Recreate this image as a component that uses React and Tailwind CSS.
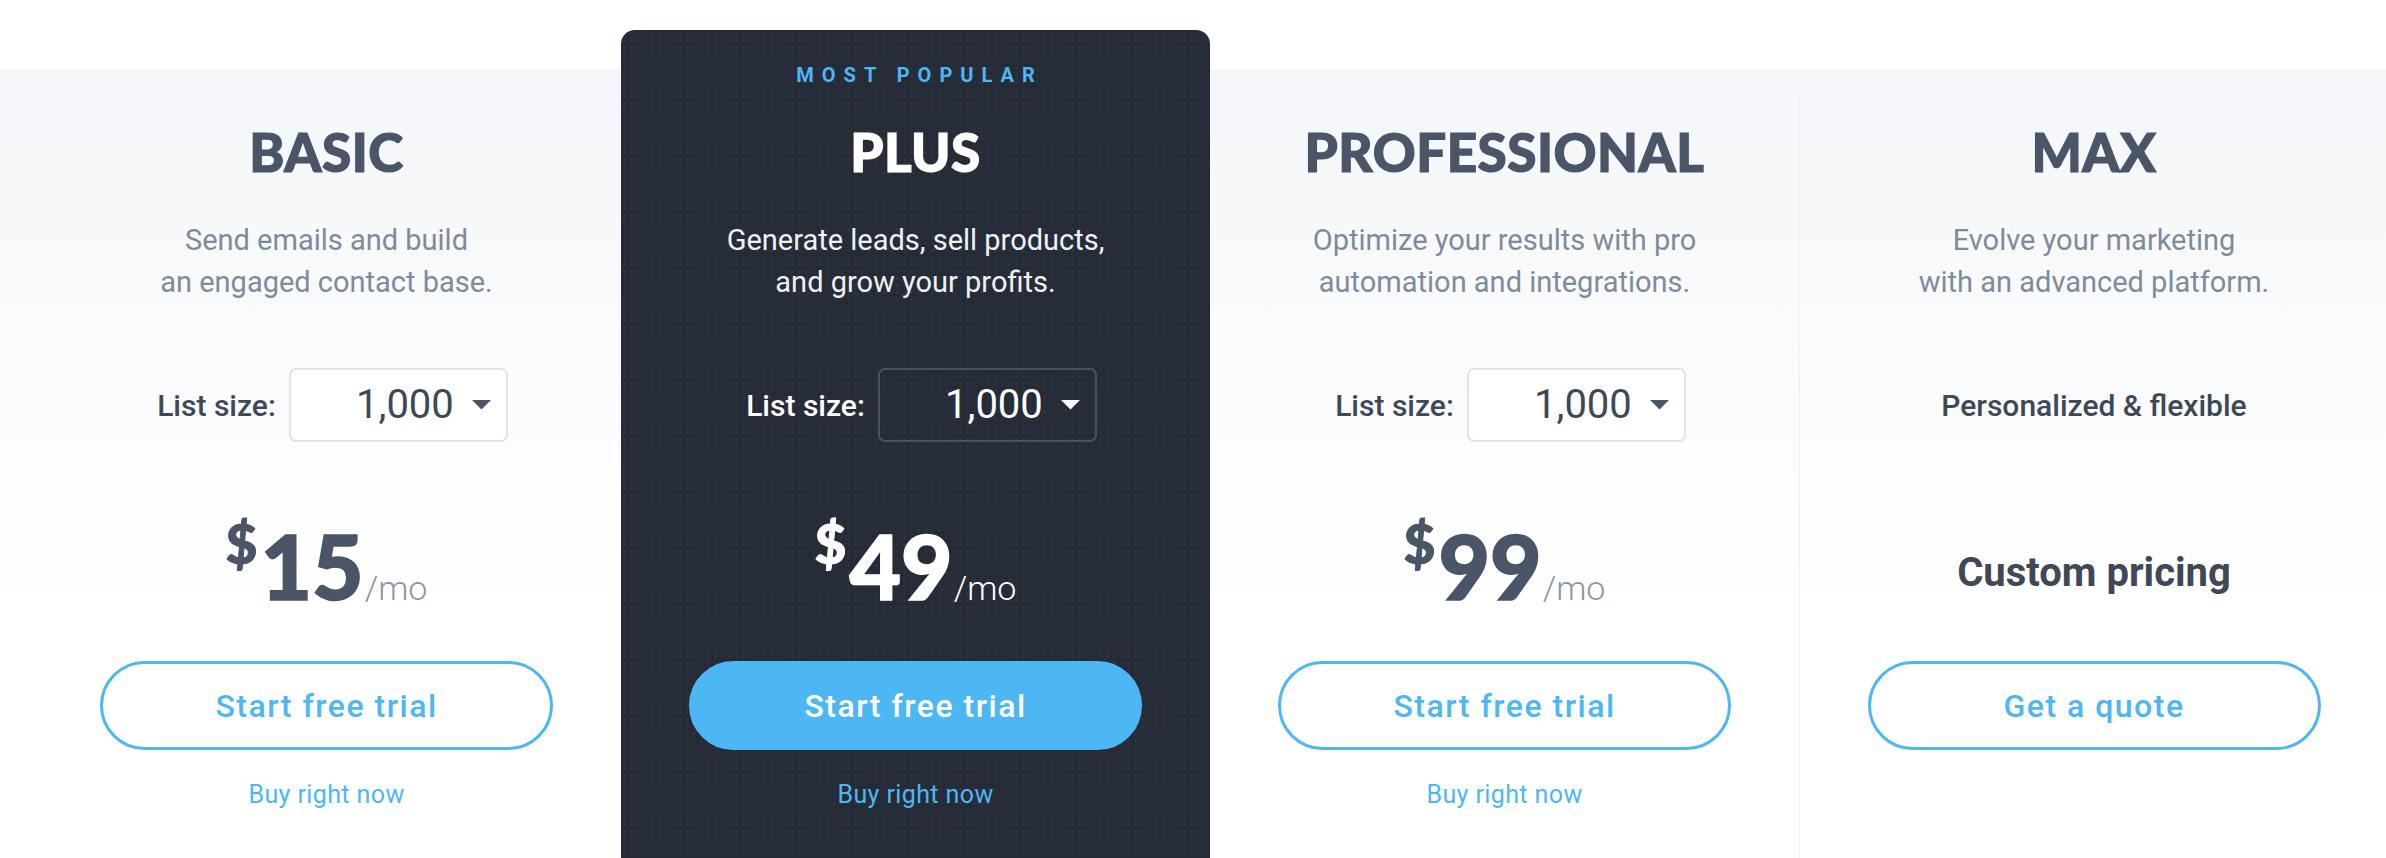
import React from "react";

const plans = [
  {
    name: "BASIC",
    desc: ["Send emails and build", "an engaged contact base."],
    price: "15",
    cta: "Start free trial",
  },
  {
    name: "PLUS",
    desc: ["Generate leads, sell products,", "and grow your profits."],
    price: "49",
    cta: "Start free trial",
    popular: true,
  },
  {
    name: "PROFESSIONAL",
    desc: ["Optimize your results with pro", "automation and integrations."],
    price: "99",
    cta: "Start free trial",
  },
  {
    name: "MAX",
    desc: ["Evolve your marketing", "with an advanced platform."],
    cta: "Get a quote",
    max: true,
  },
];

function Caret({ dark }) {
  return (
    <svg width="19" height="10" viewBox="0 0 19 10" className="shrink-0">
      <polygon points="0,0 19,0 9.5,9.5" fill={dark ? "#ffffff" : "#4a5567"} />
    </svg>
  );
}

function Column({ plan }) {
  const dark = !!plan.popular;
  let colClass = "flex flex-col items-center";
  if (dark) {
    colClass =
      "flex flex-col items-center rounded-t-[14px] bg-[#262c37] bg-[radial-gradient(circle,#323946_0.8px,transparent_1.3px)] bg-[length:7px_7px]";
  } else if (plan.max) {
    colClass = "flex flex-col items-center mt-[60px] border-l border-[#edf0f4]";
  }
  return (
    <div className={colClass}>
      <div className={plan.max ? "h-[30px]" : "h-[90px] pt-[33px]"}>
        {dark && (
          <div className="h-[24px] leading-[24px] text-[20px] font-bold tracking-[8px] pl-[8px] text-[#4db7f4] font-['Roboto',sans-serif]">
            MOST POPULAR
          </div>
        )}
      </div>
      <h2
        className={
          "h-[64px] leading-[64px] text-[53px] font-black tracking-[0.5px] font-['Lato',sans-serif] [-webkit-text-stroke:1.2px_currentColor] " +
          (dark ? "text-white" : "text-[#4a5567]")
        }
      >
        {plan.name}
      </h2>
      <p
        className={
          "mt-[35px] text-[29px] leading-[42px] text-center font-normal " +
          (dark ? "text-[#eef1f5]" : "text-[#7d8b9d]")
        }
      >
        {plan.desc[0]}
        <br />
        {plan.desc[1]}
      </p>

      <div className={"mt-[65px] h-[74px] flex items-center gap-[13px] " + (plan.max ? "" : "pl-[12px]")}>
        {plan.max ? (
          <span className="text-[30px] font-medium text-[#3f4856]">Personalized &amp; flexible</span>
        ) : (
          <>
            <span className={"text-[30px] font-medium " + (dark ? "text-white" : "text-[#3f4856]")}>
              List size:
            </span>
            <div
              className={
                "w-[219px] h-[74px] rounded-[7px] border-2 flex items-center justify-end gap-[18px] pr-[15px] " +
                (dark ? "border-[#4a5260]" : "border-[#e0e4ea] bg-white")
              }
            >
              <span className={"text-[40px] leading-none " + (dark ? "text-white" : "text-[#3f4856]")}>1,000</span>
              <Caret dark={dark} />
            </div>
          </>
        )}
      </div>

      <div className="mt-[80px] h-[88px] flex items-baseline">
        {plan.max ? (
          <span className="pt-[31px] text-[40px] leading-[40px] font-bold text-[#3f4856] self-start">
            Custom pricing
          </span>
        ) : (
          <>
            <span
              className={
                "self-start -mt-[6px] text-[55px] leading-[55px] font-black font-['Lato',sans-serif] [-webkit-text-stroke:1px_currentColor] " +
                (dark ? "text-white" : "text-[#4a5567]")
              }
            >
              $
            </span>
            <span
              className={
                "ml-[3px] text-[89px] leading-[88px] font-black font-['Lato',sans-serif] [-webkit-text-stroke:1.6px_currentColor] " +
                (dark ? "text-white" : "text-[#4a5567]")
              }
            >
              {plan.price}
            </span>
            <span className={"ml-[1px] text-[34px] font-light " + (dark ? "text-white" : "text-[#8a97a8]")}>
              /mo
            </span>
          </>
        )}
      </div>

      <button
        className={
          "mt-[51px] w-[453px] h-[89px] rounded-full border-[3px] border-[#4db7f4] text-[32px] font-medium tracking-[1.5px] " +
          (dark ? "bg-[#4db7f4] text-white" : "bg-white text-[#4db7f4]")
        }
      >
        {plan.cta}
      </button>

      {!plan.max && (
        <a className="mt-[30px] text-[25px] leading-[30px] tracking-[0.4px] text-[#4db7f4]">Buy right now</a>
      )}
    </div>
  );
}

export default function App() {
  return (
    <div className="w-[2386px] h-[858px] overflow-hidden bg-[linear-gradient(to_bottom,#ffffff_0px,#ffffff_70px,#f4f6f9_70px,#fbfcfd_420px,#ffffff_620px)] pt-[30px] pl-[32px] font-['Roboto',sans-serif]">
      <div className="grid grid-cols-[repeat(4,589px)] h-[828px]">
        {plans.map((p) => (
          <Column key={p.name} plan={p} />
        ))}
      </div>
    </div>
  );
}
